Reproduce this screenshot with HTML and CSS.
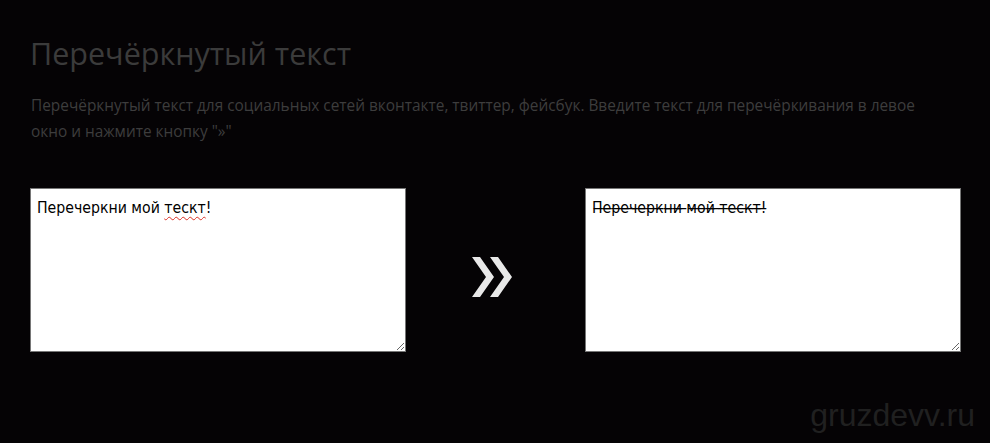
FILE: index.html
```html
<!DOCTYPE html>
<html lang="ru">
<head>
<meta charset="utf-8">
<title>Перечёркнутый текст</title>
<link rel="stylesheet" href="styles.css">
</head>
<body>
<main class="page">
  <h1 class="title">Перечёркнутый текст</h1>
  <p class="lead">Перечёркнутый текст для социальных сетей вконтакте, твиттер, фейсбук. Введите текст для перечёркивания в левое окно и нажмите кнопку "»"</p>
  <div class="tool">
    <div class="box" contenteditable="true" spellcheck="false">Перечеркни мой <span class="typo">тескт</span>!</div>
    <div class="arrow-cell">
      <button class="go" type="button" aria-label="Перечеркнуть">
        <svg width="44" height="42" viewBox="0 0 44 42" aria-hidden="true">
          <polygon points="1,1 9,1 23,21 9,41 1,41 15,21" fill="#e8e8e8"/>
          <polygon points="19,1 27,1 41,21 27,41 19,41 33,21" fill="#e8e8e8"/>
        </svg>
      </button>
    </div>
    <div class="box" contenteditable="true" spellcheck="false">П̶е̶р̶е̶ч̶е̶р̶к̶н̶и̶ ̶м̶о̶й̶ ̶т̶е̶с̶к̶т̶!̶</div>
  </div>
</main>
<div class="watermark">gruzdevv.ru</div>
</body>
</html>
```

FILE: styles.css
```css
html, body {
  margin: 0;
  height: 100%;
  background: #050305;
}

body {
  font-family: "Open Sans", "DejaVu Sans", sans-serif;
  position: relative;
  overflow: hidden;
}

.page {
  padding: 33px 30px 0 30px;
}

.title {
  margin: 0;
  font-size: 30.5px;
  font-weight: 400;
  line-height: 40px;
  color: #3b3b3b;
}

.lead {
  margin: 20px 0 0 1px;
  max-width: 898px;
  font-size: 15.4px;
  line-height: 26px;
  color: #3d3d3d;
}

.tool {
  display: flex;
  align-items: center;
  margin-top: 43px;
}

.box {
  box-sizing: border-box;
  width: 376px;
  height: 164px;
  flex: none;
  background: #fff;
  border: 1px solid #767676;
  padding: 10px 6px 6px;
  font-family: "DejaVu Sans Condensed", "DejaVu Sans", sans-serif;
  font-size: 15.7px;
  line-height: 18px;
  color: #000;
  resize: both;
  overflow: auto;
  outline: none;
}

.typo {
  text-decoration: underline wavy #d93025;
  text-decoration-thickness: 1px;
  text-underline-offset: 3px;
}

.arrow-cell {
  width: 179px;
  flex: none;
  display: flex;
  justify-content: center;
}

.go {
  background: none;
  border: 0;
  padding: 0;
  margin: 14px 5px 0 0;
  cursor: pointer;
  display: block;
}

.go svg {
  display: block;
}

.watermark {
  position: absolute;
  right: 15px;
  bottom: 9px;
  font-family: "Liberation Sans", Arial, sans-serif;
  font-size: 32px;
  color: #202020;
}
```
